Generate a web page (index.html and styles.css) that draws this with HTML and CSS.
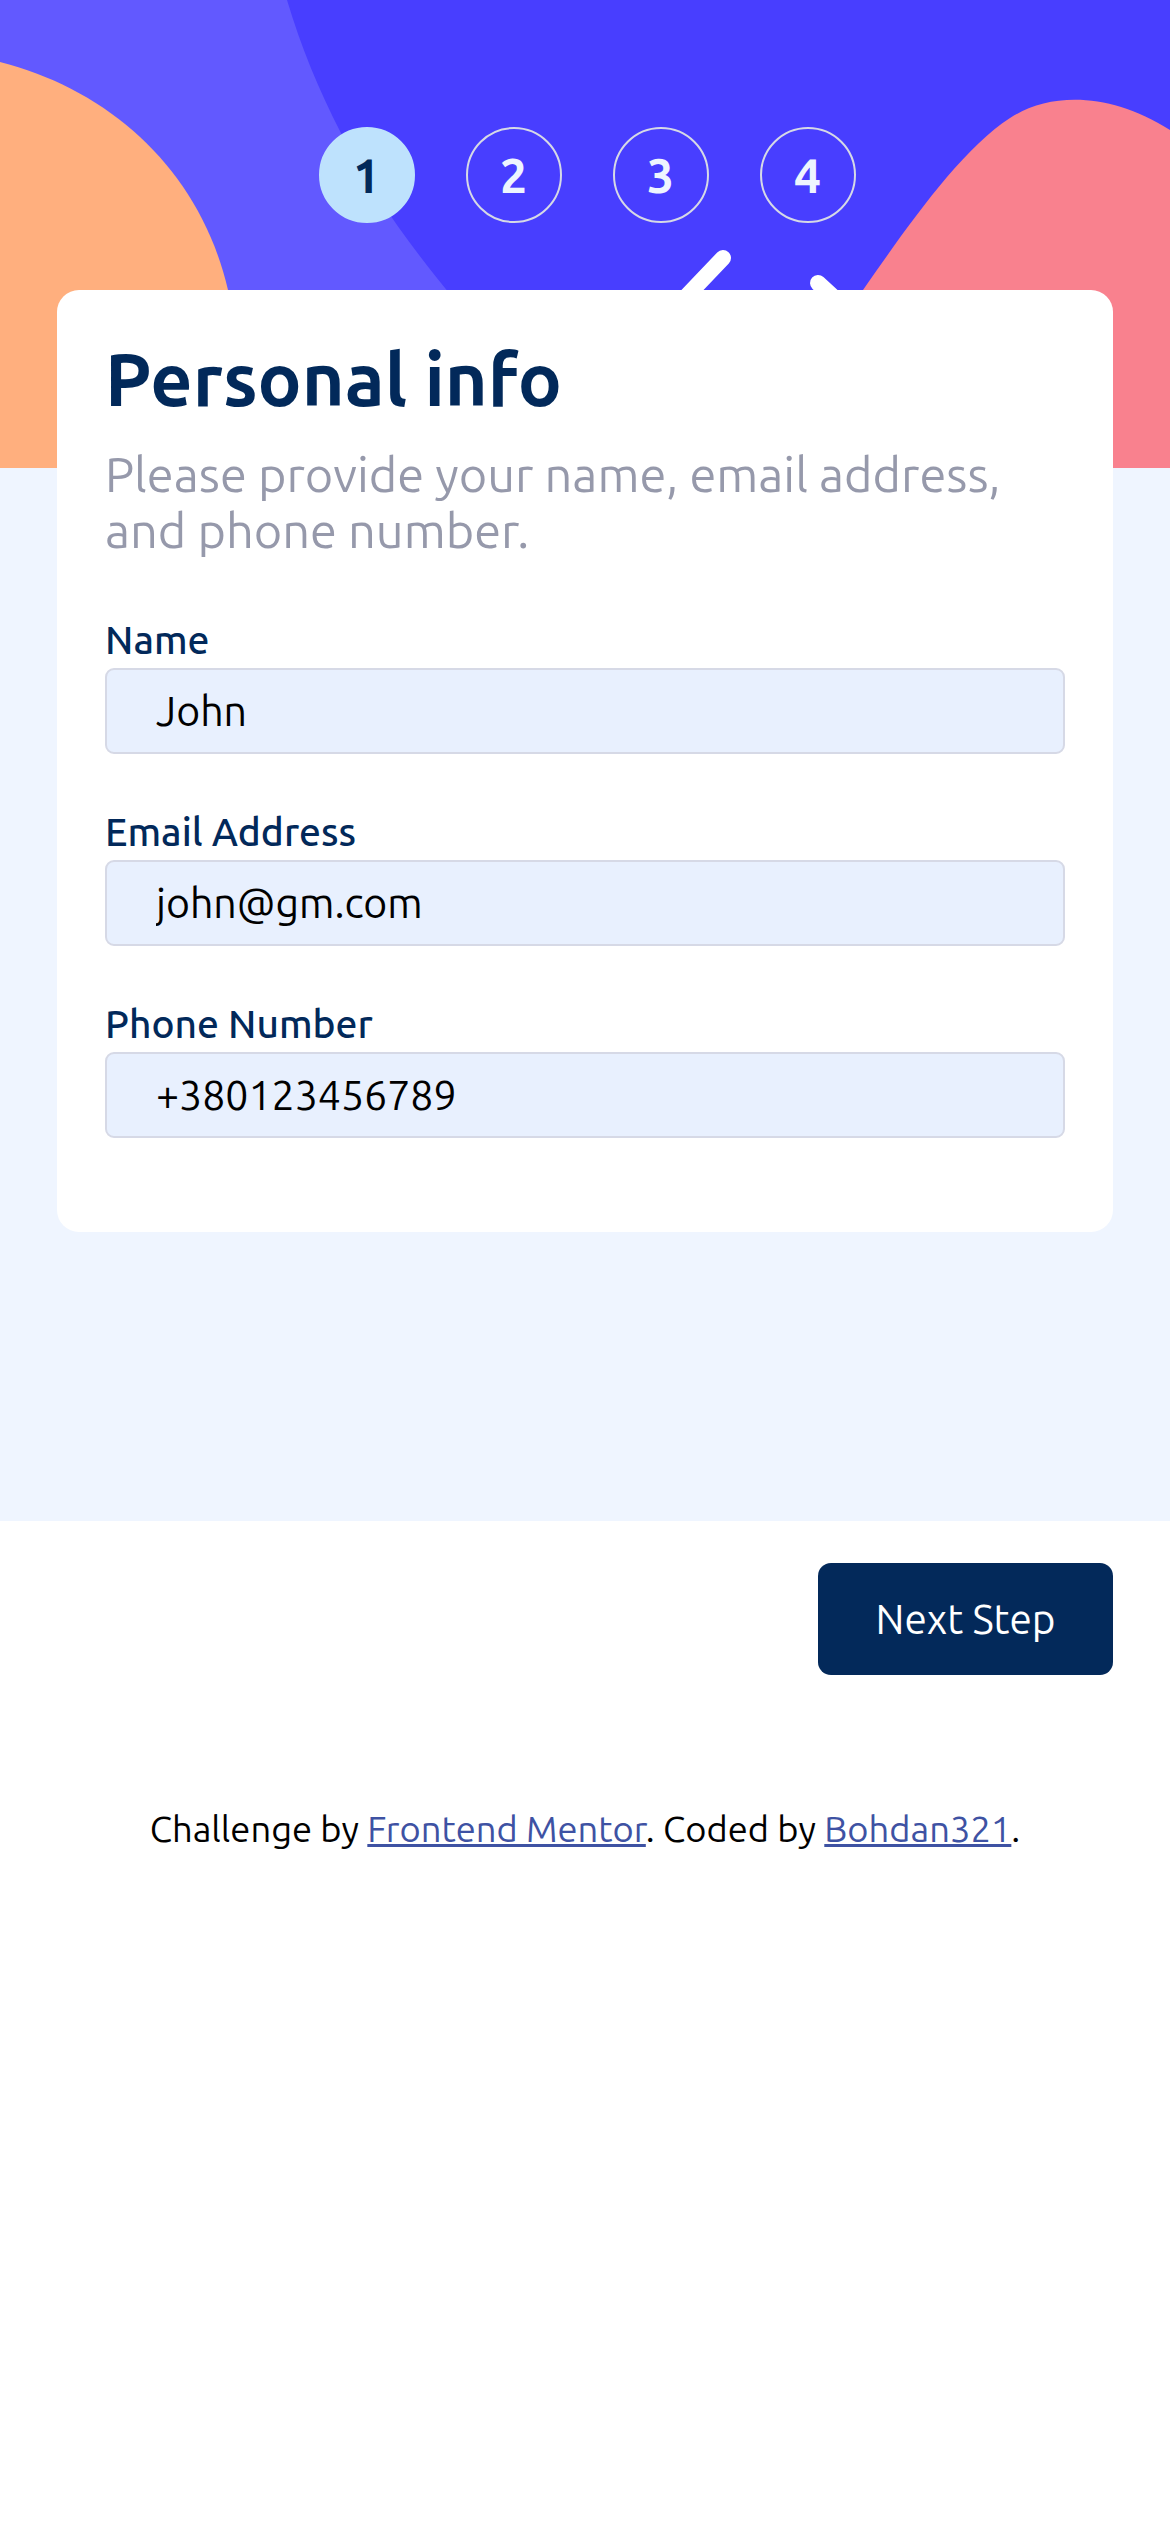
FILE: index.html
```html
<!DOCTYPE html>
<html lang="en">
<head>
<meta charset="utf-8">
<meta name="viewport" content="width=device-width, initial-scale=1">
<title>Multi-step form | Personal info</title>
<link rel="stylesheet" href="styles.css">
</head>
<body>
<div class="page">
  <header class="hero">
    <svg class="hero-bg" viewBox="0 0 1170 468" preserveAspectRatio="none" aria-hidden="true">
      <rect x="0" y="0" width="1170" height="468" fill="#483eff"/>
      <path fill="#6259ff" d="M0 0 H287 C320 110 375 205 455 300 L560 468 H0 Z"/>
      <path fill="#ffaf7e" d="M0 62 C110 90 200 170 228 290 L245 468 H0 Z"/>
      <path fill="#f9818e" d="M770 468 C800 400 830 340 863 290 C905 230 960 150 1010 118 C1050 92 1110 92 1170 130 V468 Z"/>
      <path d="M723 258 L640 345" stroke="#fff" stroke-width="16" stroke-linecap="round" fill="none"/>
      <path d="M818 283 L880 340" stroke="#fff" stroke-width="16" stroke-linecap="round" fill="none"/>
    </svg>
    <ol class="steps">
      <li class="step step--active">1</li>
      <li class="step">2</li>
      <li class="step">3</li>
      <li class="step">4</li>
    </ol>
  </header>
  <main class="main">
    <form class="card">
      <h1 class="title">Personal info</h1>
      <p class="subtitle">Please provide your name, email address, and phone number.</p>
      <div class="fields">
        <div class="field">
          <label class="label" for="name">Name</label>
          <input class="input" id="name" type="text" value="John">
        </div>
        <div class="field">
          <label class="label" for="email">Email Address</label>
          <input class="input" id="email" type="email" value="john@gm.com">
        </div>
        <div class="field">
          <label class="label" for="phone">Phone Number</label>
          <input class="input" id="phone" type="tel" value="+380123456789">
        </div>
      </div>
    </form>
  </main>
  <nav class="actions">
    <button class="btn" type="button">Next Step</button>
  </nav>
  <footer class="attribution">Challenge by <a href="#">Frontend Mentor</a>. Coded by <a href="#">Bohdan321</a>.</footer>
</div>
</body>
</html>
```

FILE: styles.css
```css
* { box-sizing: border-box; }
html, body { margin: 0; padding: 0; }
body {
  background: #fff;
  font-family: "Ubuntu", "Open Sans", sans-serif;
  color: #02295a;
}
.page { width: 1170px; }

.hero {
  position: relative;
  height: 468px;
  padding-top: 127px;
  overflow: hidden;
}
.hero-bg {
  position: absolute;
  inset: 0;
  width: 100%;
  height: 100%;
  display: block;
}
.steps {
  position: relative;
  list-style: none;
  margin: 0;
  padding: 0 0 0 4px;
  display: flex;
  justify-content: center;
  gap: 51px;
}
.step {
  width: 96px;
  height: 96px;
  border-radius: 50%;
  border: 2px solid #d6d9e6;
  display: flex;
  align-items: center;
  justify-content: center;
  color: #eef5ff;
  font-weight: 700;
  font-size: 48px;
  line-height: 1;
}
.step--active {
  background: #bee2fd;
  border-color: #bee2fd;
  color: #02295a;
}

.main {
  background: #eff5ff;
  padding: 0 57px 289px;
}
.card {
  position: relative;
  margin: -178px 0 0;
  background: #fff;
  border-radius: 22px;
  padding: 49px 48px 94px;
}
.title {
  margin: 0;
  font-size: 73.5px;
  line-height: 80px;
  font-weight: 700;
  color: #02295a;
}
.subtitle {
  margin: 27px 0 0;
  font-size: 48.7px;
  line-height: 56px;
  color: #9699ab;
}
.fields {
  margin-top: 62px;
  display: flex;
  flex-direction: column;
  gap: 58px;
}
.field {
  display: flex;
  flex-direction: column;
  gap: 8px;
}
.label {
  font-size: 39px;
  line-height: 40px;
  font-weight: 500;
  color: #02295a;
}
.input {
  width: 100%;
  height: 86px;
  border: 2px solid #d6d9e6;
  border-radius: 9px;
  background: #e8f0fe;
  padding: 0 0 0 49px;
  font-family: inherit;
  font-size: 41px;
  color: #000;
  outline: none;
}

.actions {
  display: flex;
  justify-content: flex-end;
  padding: 42px 57px 0;
}
.btn {
  width: 295px;
  height: 112px;
  border: 0;
  border-radius: 13px;
  background: #03295a;
  color: #fff;
  font-family: inherit;
  font-size: 40.5px;
}
.attribution {
  margin-top: 134px;
  text-align: center;
  font-size: 36.3px;
  line-height: 40px;
  color: #000;
}
.attribution a { color: #3e52a3; }
```
